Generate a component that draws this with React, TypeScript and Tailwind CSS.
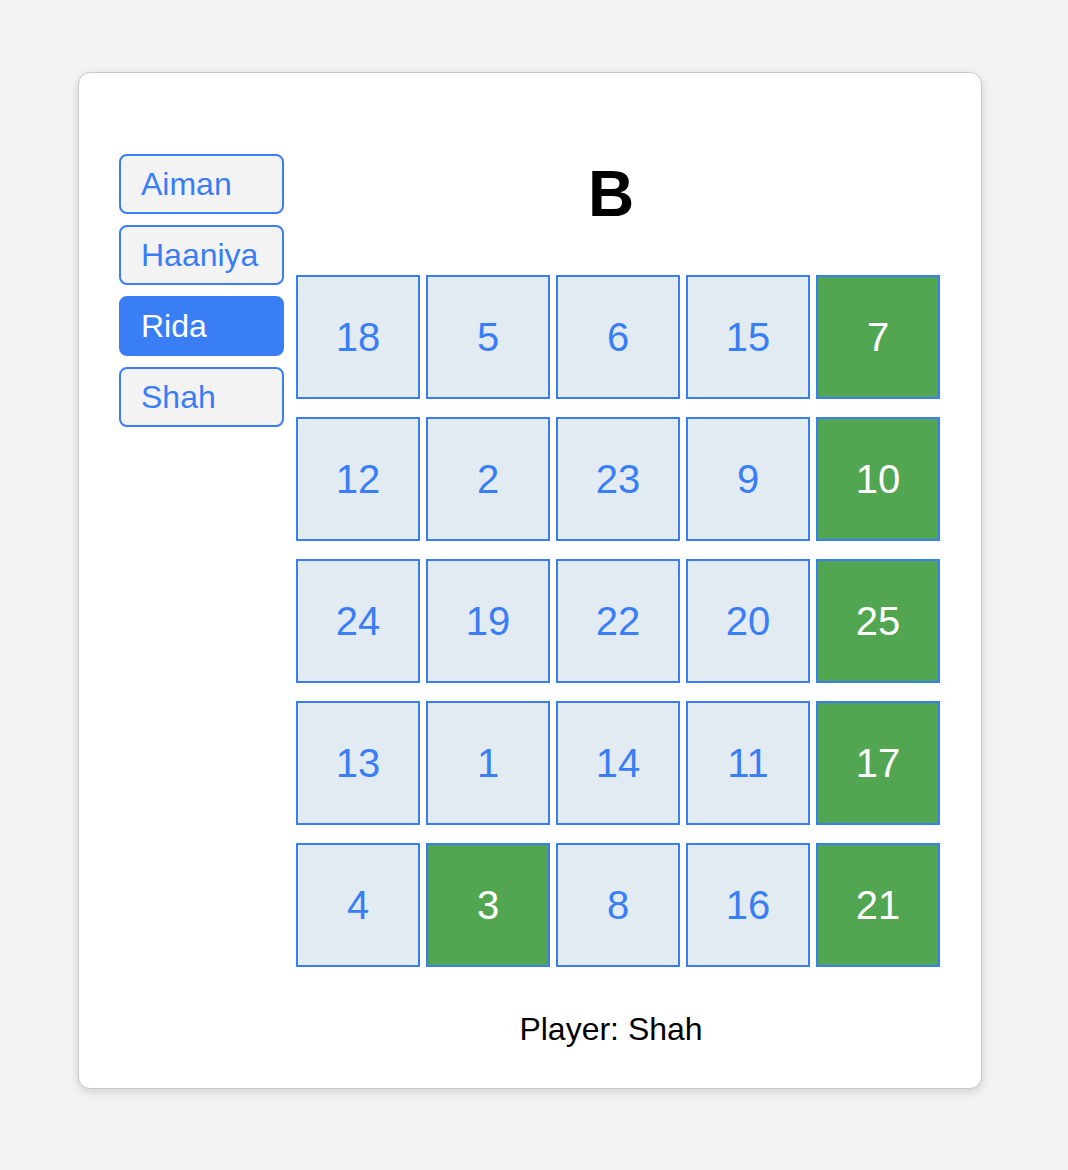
import React from "react";

const players = ["Aiman", "Haaniya", "Rida", "Shah"];
const grid: [number, boolean][][] = [
  [[18, false], [5, false], [6, false], [15, false], [7, true]],
  [[12, false], [2, false], [23, false], [9, false], [10, true]],
  [[24, false], [19, false], [22, false], [20, false], [25, true]],
  [[13, false], [1, false], [14, false], [11, false], [17, true]],
  [[4, false], [3, true], [8, false], [16, false], [21, true]],
];

export default function App() {
  return (
    <div
      className="min-h-[1170px] w-full bg-[#f3f3f3] pt-[72px]"
      style={{ fontFamily: '"Liberation Sans", Arial, sans-serif' }}
    >
      <div className="ml-[78px] w-[904px] rounded-[12px] border border-[#c8c8c8] bg-white pt-[40px] pb-[40px] pl-[40px] pr-[41px] shadow-[0_3px_10px_rgba(0,0,0,0.14)]">
        <div className="flex">
          <div className="mt-[41px] flex w-[165px] flex-col gap-[11px]">
            {players.map((p) => {
              const active = p === "Rida";
              return (
                <div
                  key={p}
                  className={
                    active
                      ? "flex h-[60px] items-center rounded-[8px] border-2 border-[#3a7ef6] bg-[#3a7ef6] pl-[20px] text-[32px] leading-none text-white"
                      : "flex h-[60px] items-center rounded-[8px] border-2 border-[#3a7ef6] bg-[#f3f3f3] pl-[20px] text-[32px] leading-none text-[#3a7ef6]"
                  }
                >
                  {p}
                </div>
              );
            })}
          </div>
          <div className="ml-[12px] w-[644px]">
            <div className="flex h-[162px] items-center justify-center pr-[14px]">
              <span className="text-[64px] font-bold leading-none text-black">B</span>
            </div>
            <div className="grid grid-cols-5 gap-x-[6px] gap-y-[18px]">
              {grid.flat().map(([n, marked], i) => (
                <div
                  key={i}
                  className={
                    marked
                      ? "flex h-[124px] w-[124px] items-center justify-center border-2 border-[#3a7ef6] bg-[#52a551] text-[40px] text-white"
                      : "flex h-[124px] w-[124px] items-center justify-center border-2 border-[#3a7ef6] bg-[#e2eaf2] text-[40px] text-[#3a7ef6]"
                  }
                >
                  {n}
                </div>
              ))}
            </div>
            <div className="mt-[44px] pr-[14px] text-center text-[32px] leading-[37px] text-black">
              Player: Shah
            </div>
          </div>
        </div>
      </div>
    </div>
  );
}
